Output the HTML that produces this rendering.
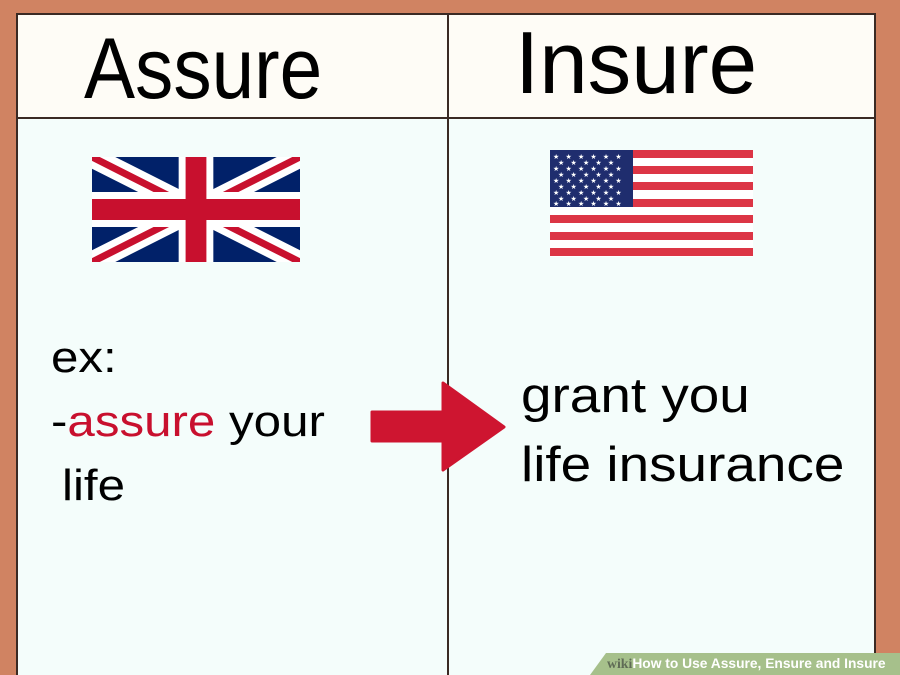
<!DOCTYPE html>
<html><head><meta charset="utf-8"><style>
html,body{margin:0;width:900px;height:675px;overflow:hidden}
body{background:#d08362;position:relative;font-family:"Liberation Sans",sans-serif}
.t{position:absolute;white-space:nowrap;line-height:1}
</style></head><body>
<div style="position:absolute;left:16px;top:13px;width:860px;height:680px;background:#f4fdfb;border:2px solid #3a2a24;box-sizing:border-box"></div>
<div style="position:absolute;left:18px;top:15px;width:856px;height:102px;background:#fefcf6;border-bottom:2px solid #3a2a24"></div>
<div style="position:absolute;left:447px;top:15px;width:2px;height:660px;background:#3a2a24"></div>
<div class="t" style="left:84px;top:26px;font-size:86px;transform:scaleX(0.89);transform-origin:left">Assure</div>
<div class="t" style="left:515px;top:19px;font-size:88px;transform:scaleX(0.99);transform-origin:left">Insure</div>
<svg style="position:absolute;left:92px;top:157px" width="208" height="105" viewBox="0 0 60 30" preserveAspectRatio="none">
<rect width="60" height="30" fill="#012169"/>
<path d="M0,0 L60,30 M60,0 L0,30" stroke="#fff" stroke-width="6"/>
<path d="M0,0 L30,15 M60,30 L30,15 M60,0 L30,15 M0,30 L30,15" stroke="#C8102E" stroke-width="2"/>
<path d="M30,0 V30 M0,15 H60" stroke="#fff" stroke-width="10"/>
<path d="M30,0 V30 M0,15 H60" stroke="#C8102E" stroke-width="6"/>
</svg>
<svg style="position:absolute;left:550px;top:150px" width="203" height="107" viewBox="0 0 203 107">
<rect width="203" height="107" fill="#fff"/>
<g fill="#dc3545">
<rect y="0" width="203" height="8"/><rect y="16" width="203" height="8"/><rect y="32" width="203" height="8"/><rect y="49" width="203" height="8"/><rect y="65" width="203" height="8"/><rect y="82" width="203" height="8"/><rect y="98" width="203" height="8"/>
</g>
<rect width="83" height="57" fill="#1f2d6e"/>
<g fill="#fff" font-size="7" font-family="DejaVu Sans">
<text x="3" y="9" letter-spacing="6.2">★★★★★★</text>
<text x="8" y="15" letter-spacing="6.2">★★★★★</text>
<text x="3" y="21" letter-spacing="6.2">★★★★★★</text>
<text x="8" y="27" letter-spacing="6.2">★★★★★</text>
<text x="3" y="33" letter-spacing="6.2">★★★★★★</text>
<text x="8" y="39" letter-spacing="6.2">★★★★★</text>
<text x="3" y="45" letter-spacing="6.2">★★★★★★</text>
<text x="8" y="51" letter-spacing="6.2">★★★★★</text>
<text x="3" y="56" letter-spacing="6.2">★★★★★★</text>
</g>
</svg>
<div class="t" style="left:51px;top:336px;font-size:44px;transform:scaleX(1.12);transform-origin:left">ex:</div>
<div class="t" style="left:51px;top:400px;font-size:44px;transform:scaleX(1.12);transform-origin:left">-<span style="color:#c8102e">assure</span> your</div>
<div class="t" style="left:62px;top:464px;font-size:44px;transform:scaleX(1.12);transform-origin:left">life</div>
<svg style="position:absolute;left:368px;top:380px" width="140" height="92" viewBox="368 380 140 92">
<path d="M372,412 H443 V383 L504,427 L443,470 V441 H372 Z" fill="#ce1530" stroke="#ce1530" stroke-width="3" stroke-linejoin="round"/>
</svg>
<div class="t" style="left:521px;top:372px;font-size:49px;transform:scaleX(1.12);transform-origin:left">grant you</div>
<div class="t" style="left:521px;top:441px;font-size:49px;transform:scaleX(1.12);transform-origin:left">life insurance</div>
<div style="position:absolute;left:590px;top:653px;width:320px;height:22px;background:#a6c08b;clip-path:polygon(16px 0,100% 0,100% 100%,0 100%)"></div>
<div class="t" style="left:607px;top:657px;font-size:13.8px;font-weight:bold;color:#fff"><span style="font-family:'Liberation Serif',serif;color:#5f6b55">wiki</span>How to Use Assure, Ensure and Insure</div>
</body></html>
